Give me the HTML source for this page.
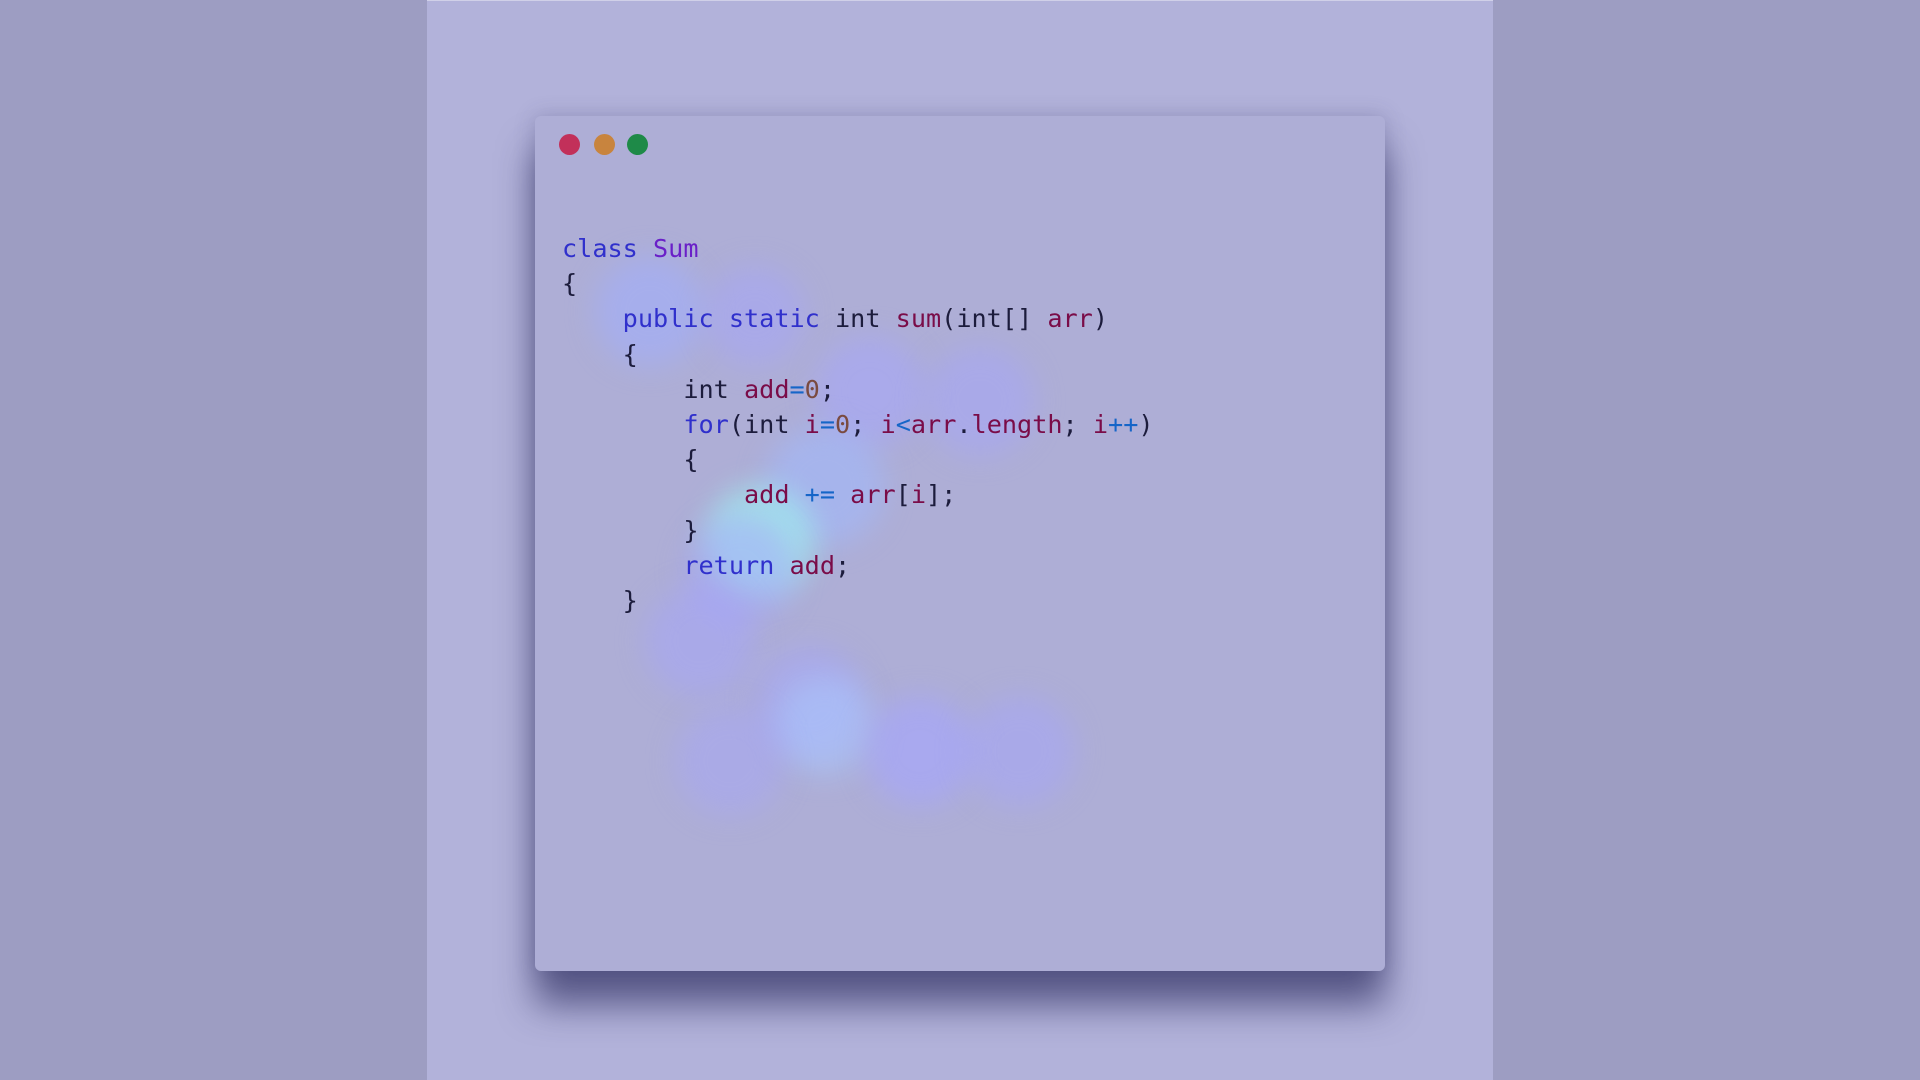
<!DOCTYPE html><html><head><style>
body{margin:0;width:1920px;height:1080px;background:#9d9dc2;position:relative;overflow:hidden}
.c{position:absolute;left:427px;top:1px;width:1066px;height:1079px;background:#b2b2da}
.top{position:absolute;left:427px;top:0;width:1066px;height:1px;background:#d0d0e8}
.w{position:absolute;left:535px;top:116px;width:850px;height:855px;background:#aeaed6;border-radius:6px;box-shadow:0 34px 36px rgba(40,40,90,.65),0 0 20px rgba(60,60,110,.25);overflow:hidden}
.d{position:absolute;top:134px;width:21px;height:21px;border-radius:50%}
.g{position:absolute;border-radius:50%;filter:blur(14px)}
pre{position:absolute;left:562px;top:231px;margin:0;font:25.2px/35.2px "DejaVu Sans Mono","Liberation Mono",monospace;color:#1c1c3c}
.k{color:#3030cc}.p{color:#6a20c8}.v{color:#7a0c48}.o{color:#1565c8}.n{color:#7a4a40}
</style></head><body>
<div class="c"></div><div class="top"></div>
<div class="w">
<div class="g" style="left:60px;top:140px;width:110px;height:110px;background:rgba(160,175,255,.55)"></div>
<div class="g" style="left:170px;top:150px;width:100px;height:100px;background:rgba(165,165,255,.45)"></div>
<div class="g" style="left:280px;top:220px;width:110px;height:110px;background:rgba(165,165,255,.5)"></div>
<div class="g" style="left:390px;top:230px;width:110px;height:110px;background:rgba(165,165,255,.45)"></div>
<div class="g" style="left:230px;top:310px;width:120px;height:120px;background:rgba(160,185,255,.55)"></div>
<div class="g" style="left:170px;top:370px;width:110px;height:110px;background:rgba(160,240,240,.7)"></div>
<div class="g" style="left:150px;top:400px;width:110px;height:110px;background:rgba(165,165,255,.45)"></div>
<div class="g" style="left:110px;top:470px;width:110px;height:110px;background:rgba(165,165,255,.45)"></div>
<div class="g" style="left:220px;top:530px;width:110px;height:110px;background:rgba(165,165,255,.45)"></div>
<div class="g" style="left:240px;top:560px;width:100px;height:100px;background:rgba(170,200,255,.55)"></div>
<div class="g" style="left:330px;top:580px;width:110px;height:110px;background:rgba(165,165,255,.6)"></div>
<div class="g" style="left:430px;top:580px;width:110px;height:110px;background:rgba(165,165,255,.45)"></div>
<div class="g" style="left:140px;top:590px;width:110px;height:110px;background:rgba(165,165,255,.4)"></div>
</div>
<div class="d" style="left:559px;background:#c2305a"></div>
<div class="d" style="left:594px;background:#c8843e"></div>
<div class="d" style="left:627px;background:#1e8a48"></div>
<pre><span class="k">class</span> <span class="p">Sum</span>
{
    <span class="k">public</span> <span class="k">static</span> int <span class="v">sum</span>(int[] <span class="v">arr</span>)
    {
        int <span class="v">add</span><span class="o">=</span><span class="n">0</span>;
        <span class="k">for</span>(int <span class="v">i</span><span class="o">=</span><span class="n">0</span>; <span class="v">i</span><span class="o">&lt;</span><span class="v">arr</span>.<span class="v">length</span>; <span class="v">i</span><span class="o">++</span>)
        {
            <span class="v">add</span> <span class="o">+=</span> <span class="v">arr</span>[<span class="v">i</span>];
        }
        <span class="k">return</span> <span class="v">add</span>;
    }</pre>
</body></html>
